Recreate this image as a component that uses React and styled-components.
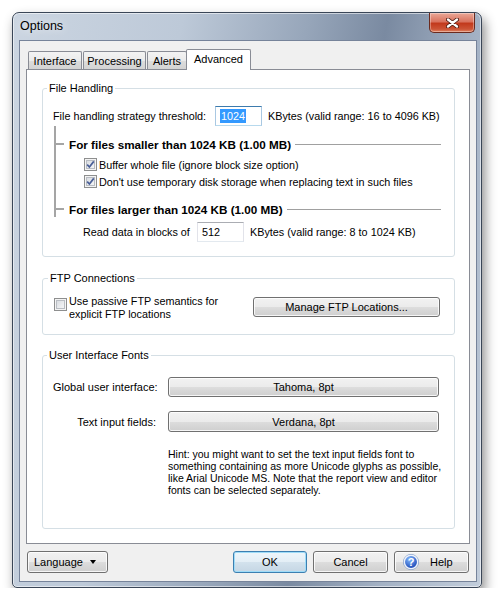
import styled, { createGlobalStyle } from 'styled-components'

const GlobalStyle = createGlobalStyle`
  html, body {
    margin: 0;
    padding: 0;
    background: #fff;
  }
  body {
    font-family: "Liberation Sans", Arial, sans-serif;
    font-size: 10.8px;
    color: #000;
  }
`

const Page = styled.div`
  padding: 12px 0 0 12px;
`

const Window = styled.div`
  width: 470px;
  height: 576px;
  box-sizing: border-box;
  display: flex;
  flex-direction: column;
  border: 1px solid #3a4657;
  border-radius: 7px 7px 5px 5px;
  background: linear-gradient(100deg, #cbd5e1 0%, #bdc9d8 30%, #97a6ba 52%, #7a8aa1 66%, #a3b1c4 82%, #c2cddb 100%);
  box-shadow: 3px 6px 12px rgba(0, 0, 0, 0.45), inset 0 0 0 1px rgba(255, 255, 255, 0.55);
`

const TitleBar = styled.div`
  height: 27px;
  display: flex;
  align-items: flex-start;
  padding-left: 7px;
`

const Title = styled.div`
  line-height: 27px;
  font-size: 12.5px;
  text-shadow: 0 0 8px rgba(255, 255, 255, 0.9);
`

const CloseButton = styled.div`
  margin-left: auto;
  margin-right: 6px;
  width: 46px;
  height: 20px;
  box-sizing: border-box;
  border: 1px solid #6b2a1e;
  border-top: none;
  border-radius: 0 0 5px 5px;
  background: linear-gradient(#eaa897 0%, #d9735f 45%, #c23a1d 55%, #cc5436 85%, #e08766 100%);
  box-shadow: inset 0 0 0 1px rgba(255, 255, 255, 0.35);
  display: flex;
  align-items: center;
  justify-content: center;
`

const Client = styled.div`
  flex: 1;
  margin: 0 4px 5px 6px;
  border: 1px solid #76839a;
  background: #f0f0f0;
  padding: 8px 6px 0 6px;
  display: flex;
  flex-direction: column;
`

const TabStrip = styled.div`
  display: flex;
  align-items: flex-end;
  height: 20px;
`

const Tab = styled.div`
  position: relative;
  z-index: 1;
  width: ${(p) => p.w}px;
  height: ${(p) => (p.active ? 21 : 18)}px;
  box-sizing: border-box;
  margin-left: ${(p) => (p.first ? 2 : p.active ? -1 : 1)}px;
  margin-bottom: ${(p) => (p.active ? -1 : 0)}px;
  border: 1px solid #898c95;
  border-bottom: none;
  border-radius: 2px 2px 0 0;
  background: ${(p) => (p.active ? '#fff' : 'linear-gradient(#f3f3f3 0%, #ebebeb 50%, #dddddd 51%, #d3d3d3 100%)')};
  display: flex;
  align-items: center;
  justify-content: center;
  padding-bottom: ${(p) => (p.active ? 2 : 0)}px;
  font-size: 11px;
`

const Panel = styled.div`
  height: 475px;
  box-sizing: border-box;
  border: 1px solid #898c95;
  background: #fff;
  padding: 12px 14px 0 15px;
`

const Group = styled.fieldset`
  margin: ${(p) => p.mt || 0}px 0 0;
  padding: ${(p) => p.pad};
  border: 1px solid #d5dfe5;
  border-radius: 3px;
  min-width: 0;
`

const Legend = styled.legend`
  padding: 0 2px;
  margin-left: -6px;
  line-height: 13px;
  font-size: 11px;
`

const Row = styled.div`
  display: flex;
  align-items: center;
  height: 20px;
  margin-left: ${(p) => p.ml || 0}px;
  margin-top: ${(p) => p.mt || 0}px;
`

const Label = styled.span`
  width: ${(p) => p.w}px;
  flex-shrink: 0;
  white-space: nowrap;
`

const Field = styled.div`
  width: ${(p) => p.w}px;
  height: 20px;
  box-sizing: border-box;
  border: 1px solid ${(p) => (p.focused ? '#a9c8e2' : '#e2e3ea')};
  border-top-color: ${(p) => (p.focused ? '#3d7bad' : '#abadb3')};
  border-bottom-color: ${(p) => (p.focused ? '#b7d9ed' : '#e3e9ef')};
  padding-left: 4px;
  display: flex;
  align-items: center;
  margin-right: 6px;
  flex-shrink: 0;
`

const Selected = styled.span`
  background: #3399ff;
  color: #fff;
  padding: 1px 1px;
  line-height: 12px;
`

const Note = styled.span`
  white-space: nowrap;
`

const Tree = styled.div`
  margin-left: 1px;
  padding-top: 10px;
  border-left: 2px solid #a5a5a5;
`

const Heading = styled.div`
  display: flex;
  align-items: center;
  height: 16px;
  margin-top: ${(p) => p.mt || 0}px;
  margin-bottom: ${(p) => (p.last ? -7 : 0)}px;
  font-weight: bold;
  font-size: 11.7px;
  white-space: nowrap;
`

const Stub = styled.span`
  width: 8px;
  height: 2px;
  background: #a5a5a5;
  margin-right: 5px;
  flex-shrink: 0;
`

const Rule = styled.span`
  flex: 1;
  height: 1px;
  background: #a0a0a0;
  margin-left: 4px;
`

const CheckRow = styled.div`
  display: flex;
  align-items: center;
  height: 17px;
  padding-left: 28px;
  margin-top: ${(p) => p.mt || 0}px;
  white-space: nowrap;
`

const Box = styled.span`
  width: 13px;
  height: 13px;
  box-sizing: border-box;
  flex-shrink: 0;
  border: 1px solid #8e8f8f;
  background: linear-gradient(135deg, #d0d4da 0%, #eceef0 60%, #f8f8f8 100%);
  box-shadow: inset 0 0 0 1px #f4f4f4, inset 0 0 0 2px #b9bdc3;
  display: flex;
  align-items: center;
  justify-content: center;
  margin-right: 2px;
  margin-top: ${(p) => p.mt || 0}px;
`

const FtpRow = styled.div`
  display: flex;
  align-items: flex-start;
`

const CheckText = styled.span`
  line-height: 13px;
`

const Button = styled.div`
  width: ${(p) => p.w}px;
  height: ${(p) => p.h || 22}px;
  box-sizing: border-box;
  flex-shrink: 0;
  margin-left: ${(p) => (p.push ? 'auto' : '0')};
  margin-top: ${(p) => p.mt || 0}px;
  border: 1px solid ${(p) => (p.primary ? '#3c7fb1' : '#707070')};
  border-radius: 3px;
  background: ${(p) =>
    p.primary
      ? 'linear-gradient(#eef6fb 0%, #e3eef6 50%, #d3e2ed 51%, #c5d6e4 100%)'
      : 'linear-gradient(#f2f2f2 0%, #ebebeb 50%, #dddddd 51%, #cfcfcf 100%)'};
  box-shadow: inset 0 0 0 1px ${(p) => (p.primary ? '#9fdcf8' : 'rgba(255, 255, 255, 0.8)')};
  display: flex;
  align-items: center;
  justify-content: ${(p) => p.align || 'center'};
  padding: 0 ${(p) => p.px || 0}px;
  white-space: nowrap;
  font-size: 11px;
`

const FontRow = styled.div`
  display: flex;
  align-items: center;
  margin-top: ${(p) => p.mt || 0}px;
`

const FontLabel = styled.span`
  width: 103px;
  text-align: right;
  margin-right: 12px;
  flex-shrink: 0;
  white-space: nowrap;
  font-size: 11px;
`

const Hint = styled.div`
  margin: 16px 0 0 115px;
  width: 290px;
  font-size: 10.5px;
  line-height: 12px;
`

const Footer = styled.div`
  display: flex;
  align-items: center;
  gap: 6px;
  margin-top: 7px;
  padding: 0 1px;
`

const Spacer = styled.div`
  flex: 1;
`

const Arrow = styled.span`
  width: 0;
  height: 0;
  border-left: 3.5px solid transparent;
  border-right: 3.5px solid transparent;
  border-top: 4px solid #000;
  margin-left: 7px;
`

const HelpText = styled.span`
  margin-left: 11px;
`

const CheckMark = () => (
  <svg width="9" height="9" viewBox="0 0 9 9">
    <path d="M1.2 4.6 L3.4 7 L7.8 1.4" fill="none" stroke="#4a5f97" strokeWidth="1.7" />
  </svg>
)

const CloseIcon = () => (
  <svg width="13" height="10" viewBox="0 0 13 10">
    <path d="M2 1.5 L11 8.5 M11 1.5 L2 8.5" stroke="#4a1a10" strokeWidth="4" strokeLinecap="round" />
    <path d="M2 1.5 L11 8.5 M11 1.5 L2 8.5" stroke="#fff" strokeWidth="2.3" strokeLinecap="round" />
  </svg>
)

const HelpIcon = () => (
  <svg width="16" height="16" viewBox="0 0 16 16">
    <defs>
      <radialGradient id="helpGrad" cx="40%" cy="30%" r="70%">
        <stop offset="0" stopColor="#86bbff" />
        <stop offset="1" stopColor="#1a47b5" />
      </radialGradient>
    </defs>
    <circle cx="8" cy="8" r="7.6" fill="none" stroke="#7d9ccc" strokeWidth="0.8" />
    <circle cx="8" cy="8" r="6.6" fill="url(#helpGrad)" stroke="#eef3fb" strokeWidth="1.3" />
    <text x="8" y="12" textAnchor="middle" fontSize="11" fontWeight="bold" fill="#fff" fontFamily="Liberation Sans, Arial, sans-serif">
      ?
    </text>
  </svg>
)

const Checkbox = ({ checked, mt }) => <Box mt={mt}>{checked && <CheckMark />}</Box>

const tabs = [
  { name: 'Interface', w: 54 },
  { name: 'Processing', w: 63 },
  { name: 'Alerts', w: 40 },
  { name: 'Advanced', w: 65, active: true },
]

const App = () => {
  return (
    <Page>
      <GlobalStyle />
      <Window>
        <TitleBar>
          <Title>Options</Title>
          <CloseButton>
            <CloseIcon />
          </CloseButton>
        </TitleBar>
        <Client>
          <TabStrip>
            {tabs.map((t, idx) => (
              <Tab key={t.name} w={t.w} active={t.active} first={idx === 0}>
                {t.name}
              </Tab>
            ))}
          </TabStrip>
          <Panel>
            <Group pad="11px 13px 14px 10px">
              <Legend>File Handling</Legend>
              <Row>
                <Label w={162}>File handling strategy threshold:</Label>
                <Field w={47} focused>
                  <Selected>1024</Selected>
                </Field>
                <Note>KBytes (valid range: 16 to 4096 KB)</Note>
              </Row>
              <Tree>
                <Heading>
                  <Stub />
                  For files smaller than 1024 KB (1.00 MB)
                  <Rule />
                </Heading>
                <CheckRow mt={4}>
                  <Checkbox checked />
                  Buffer whole file (ignore block size option)
                </CheckRow>
                <CheckRow>
                  <Checkbox checked />
                  Don't use temporary disk storage when replacing text in such files
                </CheckRow>
                <Heading mt={11} last>
                  <Stub />
                  For files larger than 1024 KB (1.00 MB)
                  <Rule />
                </Heading>
              </Tree>
              <Row ml={30} mt={12}>
                <Label w={114}>Read data in blocks of</Label>
                <Field w={47}>512</Field>
                <Note>KBytes (valid range: 8 to 1024 KB)</Note>
              </Row>
            </Group>

            <Group mt={15} pad="10px 14px 13px 11px">
              <Legend>FTP Connections</Legend>
              <FtpRow>
                <Checkbox mt={3} />
                <CheckText>
                  Use passive FTP semantics for
                  <br />
                  explicit FTP locations
                </CheckText>
                <Button w={187} h={20} mt={2} push>
                  Manage FTP Locations...
                </Button>
              </FtpRow>
            </Group>

            <Group mt={14} pad="15px 14px 32px 10px">
              <Legend>User Interface Fonts</Legend>
              <FontRow>
                <FontLabel>Global user interface:</FontLabel>
                <Button w={271} h={20}>
                  Tahoma, 8pt
                </Button>
              </FontRow>
              <FontRow mt={14}>
                <FontLabel>Text input fields:</FontLabel>
                <Button w={271} h={21}>
                  Verdana, 8pt
                </Button>
              </FontRow>
              <Hint>
                Hint: you might want to set the text input fields font to something containing as more
                Unicode glyphs as possible, like Arial Unicode MS. Note that the report view and editor
                fonts can be selected separately.
              </Hint>
            </Group>
          </Panel>
          <Footer>
            <Button w={81} align="flex-start" px={6}>
              Language
              <Arrow />
            </Button>
            <Spacer />
            <Button w={74} primary>
              OK
            </Button>
            <Button w={75}>Cancel</Button>
            <Button w={75} align="flex-start" px={8}>
              <HelpIcon />
              <HelpText>Help</HelpText>
            </Button>
          </Footer>
        </Client>
      </Window>
    </Page>
  )
}

export default App
